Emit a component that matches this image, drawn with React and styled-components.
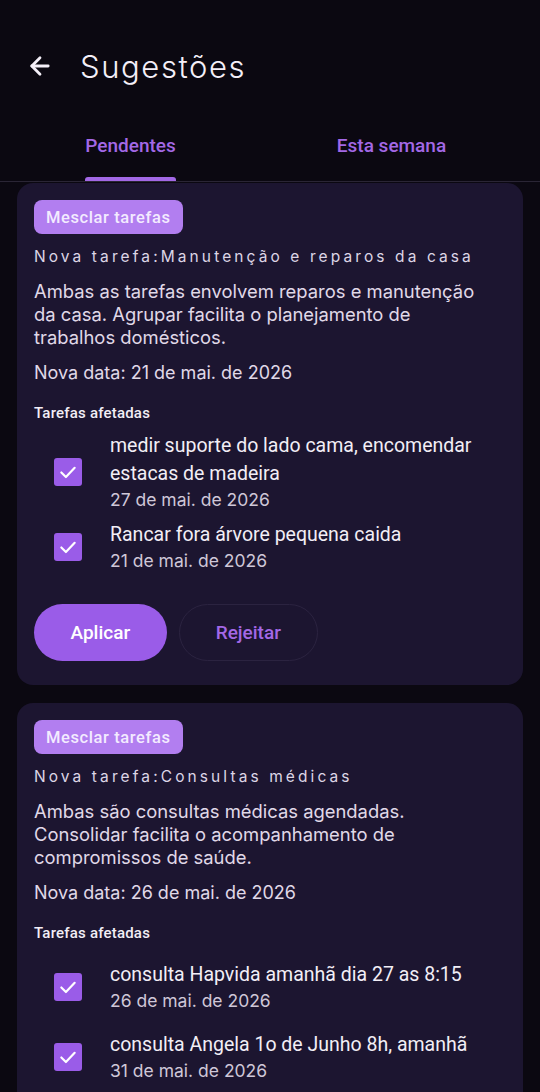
import React, { useState } from 'react';
import styled, { createGlobalStyle } from 'styled-components';
import { ArrowLeft } from 'lucide-react';

const GlobalStyle = createGlobalStyle`
	* {
		box-sizing: border-box;
	}
	body {
		margin: 0;
		background-color: #0b0811;
		font-family: Roboto, 'Noto Sans', sans-serif;
	}
`;

const Page = styled.div`
	width: 540px;
	height: 1092px;
	overflow: hidden;
	background-color: #0b0811;
	display: flex;
	flex-direction: column;
	& > * {
		flex-shrink: 0;
	}
`;

const Header = styled.div`
	height: 132px;
	display: flex;
	flex-direction: row;
	align-items: center;
	gap: 26px;
	padding: 0 0 0 26px;
	color: #f4eff8;
`;

const Title = styled.h1`
	margin: 0;
	font-family: Inter, 'Noto Sans', sans-serif;
	font-weight: 300;
	font-size: 31px;
	letter-spacing: 1.6px;
	color: #f4eff8;
`;

const Tabs = styled.div`
	display: flex;
	flex-direction: row;
	padding-right: 18px;
	border-bottom: 1px solid #2a2535;
`;

const Tab = styled.div`
	flex: 1;
	display: flex;
	justify-content: center;
	padding-top: 2px;
	cursor: pointer;
`;

const TabInner = styled.div`
	display: flex;
	flex-direction: column;
	align-items: stretch;
`;

const TabLabel = styled.div`
	font-family: Roboto, sans-serif;
	font-weight: 500;
	font-size: 19px;
	line-height: 24px;
	color: #a368e6;
`;

const Indicator = styled.div`
	margin-top: 19px;
	height: 4px;
	border-radius: 3px 3px 0 0;
	background-color: ${(p) => (p.active ? '#a368e6' : 'transparent')};
`;

const List = styled.div`
	display: flex;
	flex-direction: column;
	gap: 18px;
	padding: 1px 17px 0;
`;

const Card = styled.div`
	background-color: #1c1530;
	border-radius: 16px;
	padding: 17px 17px 24px;
	display: flex;
	flex-direction: column;
	align-items: flex-start;
`;

const Chip = styled.div`
	height: 34px;
	padding: 0 12px;
	border-radius: 8px;
	background-color: #b27ef0;
	color: #f3ebff;
	font-family: Roboto, sans-serif;
	font-weight: 500;
	font-size: 16.5px;
	letter-spacing: 0.6px;
	display: flex;
	align-items: center;
`;

const NewTask = styled.div`
	margin-top: 12px;
	font-family: Inter, sans-serif;
	font-size: 15.5px;
	line-height: 22px;
	letter-spacing: 3.1px;
	color: #ddd5e6;
`;

const Description = styled.div`
	margin-top: 12px;
	font-family: Inter, sans-serif;
	font-size: 18.4px;
	line-height: 23px;
	color: #e0d9e8;
	padding-right: 20px;
`;

const NewDate = styled.div`
	margin-top: 12px;
	font-family: Inter, sans-serif;
	font-size: 18px;
	line-height: 23px;
	color: #e0d9e8;
`;

const SectionTitle = styled.div`
	margin-top: 19px;
	font-family: Roboto, sans-serif;
	font-weight: 500;
	font-size: 15px;
	line-height: 20px;
	letter-spacing: 0.2px;
	color: #f2eef6;
`;

const Items = styled.div`
	margin-top: 9px;
	width: 100%;
	display: flex;
	flex-direction: column;
`;

const Item = styled.div`
	min-height: 70px;
	display: flex;
	flex-direction: row;
	align-items: center;
	gap: 28px;
	padding-left: 20px;
`;

const Box = styled.div`
	flex: none;
	width: 28px;
	height: 28px;
	border-radius: 3px;
	background-color: ${(p) => (p.checked ? '#9a5ce8' : 'transparent')};
	border: ${(p) => (p.checked ? 'none' : '2px solid #9a5ce8')};
	display: flex;
	align-items: center;
	justify-content: center;
	cursor: pointer;
`;

const ItemText = styled.div`
	display: flex;
	flex-direction: column;
`;

const ItemName = styled.div`
	font-family: Roboto, sans-serif;
	font-size: 19.5px;
	line-height: 28px;
	color: #f2eef6;
`;

const ItemDate = styled.div`
	font-family: Inter, sans-serif;
	font-size: 17.5px;
	line-height: 24px;
	color: #cfc7d8;
`;

const Actions = styled.div`
	margin-top: 22px;
	display: flex;
	flex-direction: row;
	gap: 12px;
`;

const Button = styled.button`
	height: 57px;
	padding: 0 ${(p) => (p.primary ? '36.5px' : '36px')};
	border-radius: 29px;
	border: ${(p) => (p.primary ? 'none' : '1.5px solid #2b2340')};
	background-color: ${(p) => (p.primary ? '#9a5ce8' : 'transparent')};
	color: ${(p) => (p.primary ? '#ffffff' : '#a368e6')};
	font-family: Roboto, sans-serif;
	font-weight: 500;
	font-size: 19px;
	cursor: pointer;
`;

const suggestions = [
	{
		id: 1,
		title: 'Manutenção e reparos da casa',
		reason: 'Ambas as tarefas envolvem reparos e manutenção da casa. Agrupar facilita o planejamento de trabalhos domésticos.',
		date: '21 de mai. de 2026',
		tasks: [
			{ id: 'a', name: 'medir suporte do lado cama, encomendar estacas de madeira', date: '27 de mai. de 2026' },
			{ id: 'b', name: 'Rancar fora árvore pequena caida', date: '21 de mai. de 2026' },
		],
	},
	{
		id: 2,
		title: 'Consultas médicas',
		reason: 'Ambas são consultas médicas agendadas. Consolidar facilita o acompanhamento de compromissos de saúde.',
		date: '26 de mai. de 2026',
		tasks: [
			{ id: 'c', name: 'consulta Hapvida amanhã dia 27 as 8:15', date: '26 de mai. de 2026' },
			{ id: 'd', name: 'consulta Angela 1o de Junho 8h, amanhã', date: '31 de mai. de 2026' },
		],
	},
];

const Check = () => (
	<svg width='20' height='20' viewBox='0 0 24 24' fill='none' stroke='#fff' strokeWidth='2.6' strokeLinecap='round' strokeLinejoin='round'>
		<polyline points='4 12.5 9.5 18 20 7' />
	</svg>
);

const TaskItem = ({ name, date }) => {
	const [checked, setChecked] = useState(true);
	return (
		<Item>
			<Box checked={checked} onClick={() => setChecked(!checked)}>
				{checked && <Check />}
			</Box>
			<ItemText>
				<ItemName>{name}</ItemName>
				<ItemDate>{date}</ItemDate>
			</ItemText>
		</Item>
	);
};

const SuggestionCard = ({ suggestion }) => (
	<Card>
		<Chip>Mesclar tarefas</Chip>
		<NewTask>Nova tarefa:{suggestion.title}</NewTask>
		<Description>{suggestion.reason}</Description>
		<NewDate>Nova data: {suggestion.date}</NewDate>
		<SectionTitle>Tarefas afetadas</SectionTitle>
		<Items>
			{suggestion.tasks.map((t) => (
				<TaskItem key={t.id} {...t} />
			))}
		</Items>
		<Actions>
			<Button primary>Aplicar</Button>
			<Button>Rejeitar</Button>
		</Actions>
	</Card>
);

const App = () => {
	const [tab, setTab] = useState(0);
	const tabs = ['Pendentes', 'Esta semana'];
	return (
		<Page>
			<GlobalStyle />
			<Header>
				<ArrowLeft size={28} strokeWidth={2.4} color='#f4eff8' />
				<Title>Sugestões</Title>
			</Header>
			<Tabs>
				{tabs.map((label, i) => (
					<Tab key={label} onClick={() => setTab(i)}>
						<TabInner>
							<TabLabel>{label}</TabLabel>
							<Indicator active={tab === i} />
						</TabInner>
					</Tab>
				))}
			</Tabs>
			<List>
				{suggestions.map((s) => (
					<SuggestionCard key={s.id} suggestion={s} />
				))}
			</List>
		</Page>
	);
};

export default App;
